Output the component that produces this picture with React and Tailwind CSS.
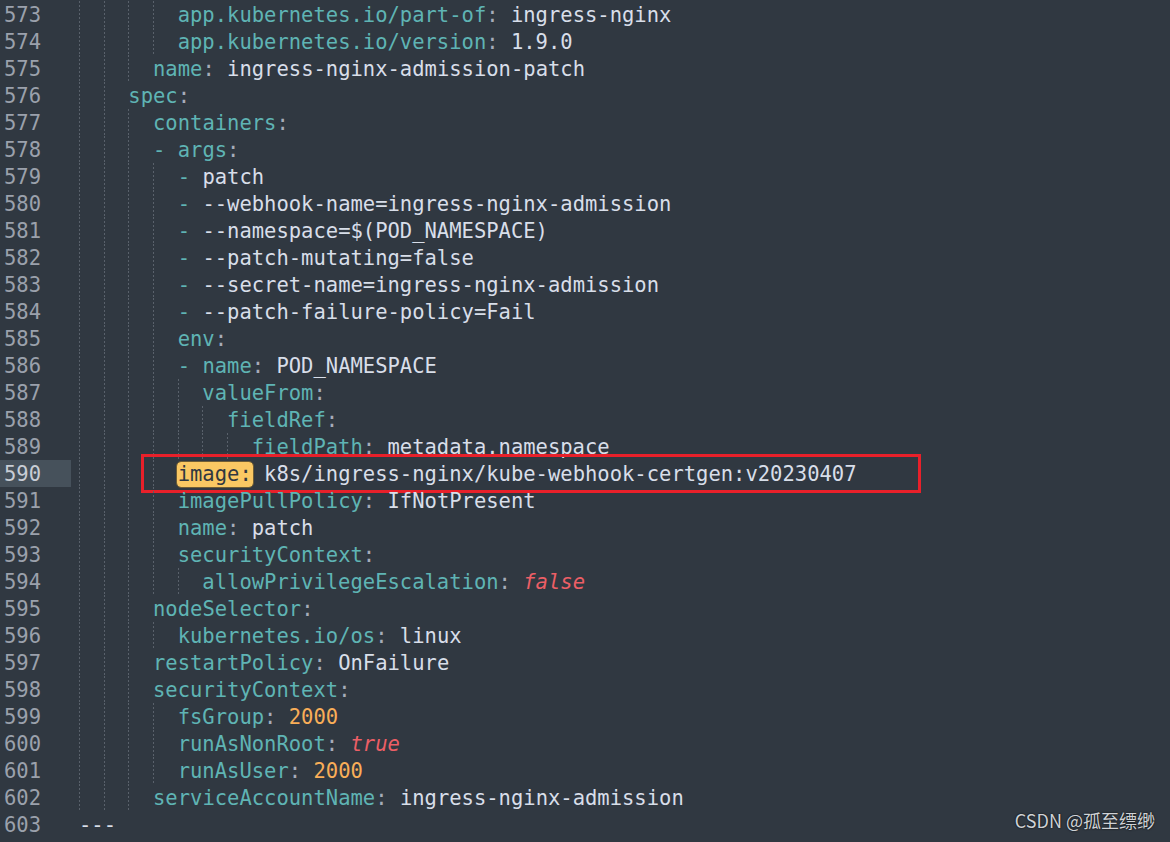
const C = {
  k: "text-[#5fb4b4]",
  p: "text-[#a6acb9]",
  v: "text-[#d8dee9]",
  n: "text-[#f9ae58]",
  b: "text-[#ec5f66] italic",
  d: "text-[#5fb4b4]",
}

// key: value helper
const kv = (key, val, t = "v") =>
  val === undefined
    ? [["k", key], ["p", ":"]]
    : [["k", key], ["p", ":"], ["v", " "], [t, val]]

const item = (val) => [["d", "- "], ["v", val]]

const lines = [
  { n: 573, i: 8, parts: kv("app.kubernetes.io/part-of", "ingress-nginx") },
  { n: 574, i: 8, parts: kv("app.kubernetes.io/version", "1.9.0") },
  { n: 575, i: 6, parts: kv("name", "ingress-nginx-admission-patch") },
  { n: 576, i: 4, parts: kv("spec") },
  { n: 577, i: 6, parts: kv("containers") },
  { n: 578, i: 6, parts: [["d", "- "], ...kv("args")] },
  { n: 579, i: 8, parts: item("patch") },
  { n: 580, i: 8, parts: item("--webhook-name=ingress-nginx-admission") },
  { n: 581, i: 8, parts: item("--namespace=$(POD_NAMESPACE)") },
  { n: 582, i: 8, parts: item("--patch-mutating=false") },
  { n: 583, i: 8, parts: item("--secret-name=ingress-nginx-admission") },
  { n: 584, i: 8, parts: item("--patch-failure-policy=Fail") },
  { n: 585, i: 8, parts: kv("env") },
  { n: 586, i: 8, parts: [["d", "- "], ...kv("name", "POD_NAMESPACE")] },
  { n: 587, i: 10, parts: kv("valueFrom") },
  { n: 588, i: 12, parts: kv("fieldRef") },
  { n: 589, i: 14, parts: kv("fieldPath", "metadata.namespace") },
  {
    n: 590,
    i: 8,
    active: true,
    parts: [["hl", "image:"], ["v", " k8s/ingress-nginx/kube-webhook-certgen:v20230407"]],
  },
  { n: 591, i: 8, parts: kv("imagePullPolicy", "IfNotPresent") },
  { n: 592, i: 8, parts: kv("name", "patch") },
  { n: 593, i: 8, parts: kv("securityContext") },
  { n: 594, i: 10, parts: kv("allowPrivilegeEscalation", "false", "b") },
  { n: 595, i: 6, parts: kv("nodeSelector") },
  { n: 596, i: 8, parts: kv("kubernetes.io/os", "linux") },
  { n: 597, i: 6, parts: kv("restartPolicy", "OnFailure") },
  { n: 598, i: 6, parts: kv("securityContext") },
  { n: 599, i: 8, parts: kv("fsGroup", "2000", "n") },
  { n: 600, i: 8, parts: kv("runAsNonRoot", "true", "b") },
  { n: 601, i: 8, parts: kv("runAsUser", "2000", "n") },
  { n: 602, i: 6, parts: kv("serviceAccountName", "ingress-nginx-admission") },
  { n: 603, i: 0, parts: [["v", "---"]] },
]

function Line({ n, i, parts, active }) {
  return (
    <div className="relative flex h-[27px]">
      <div
        className={`w-[71px] shrink-0 pl-[4px] pt-[1px] leading-[27px] ${
          active ? "bg-[#46515b] text-[#c8cdd5]" : "text-[#9ba1ac]"
        }`}
      >
        {n}
      </div>
      <div className="ml-[8px] flex whitespace-pre leading-[27px]">
        {Array.from({ length: i / 2 }).map((_, g) => (
          <span
            key={g}
            className="inline-block h-[27px] w-[24.68px] shrink-0 bg-[repeating-linear-gradient(to_bottom,#59616b_0px,#59616b_2px,transparent_2px,transparent_4px)] bg-[length:1px_100%] bg-no-repeat"
          />
        ))}
        <span className="pt-[1px]">
          {parts.map(([t, txt], k) =>
            t === "hl" ? (
              <span
                key={k}
                className="-mx-[1px] inline-block rounded-[4px] bg-[#fac863] px-[1px] leading-[25px] text-[#303841] outline outline-1 outline-[#6e5d36]"
              >
                {txt}
              </span>
            ) : (
              <span key={k} className={C[t]}>
                {txt}
              </span>
            )
          )}
        </span>
      </div>
      {active && (
        <div className="pointer-events-none absolute left-[141px] top-[-6px] h-[39px] w-[780px] border-[3px] border-[#e8202a]" />
      )}
    </div>
  )
}

export default function App() {
  return (
    <div className="relative h-[842px] w-full overflow-hidden bg-[#303841] pt-[1px] font-['DejaVu_Sans_Mono',monospace] text-[20.5px]">
      {lines.map((l) => (
        <Line key={l.n} {...l} />
      ))}
      <div className="absolute bottom-[8px] right-[15px] font-['Noto_Sans_CJK_SC',sans-serif] text-[18px] text-[#cfd2d6] [text-shadow:0_0_2px_#000]">
        CSDN @孤至缥缈
      </div>
    </div>
  )
}
